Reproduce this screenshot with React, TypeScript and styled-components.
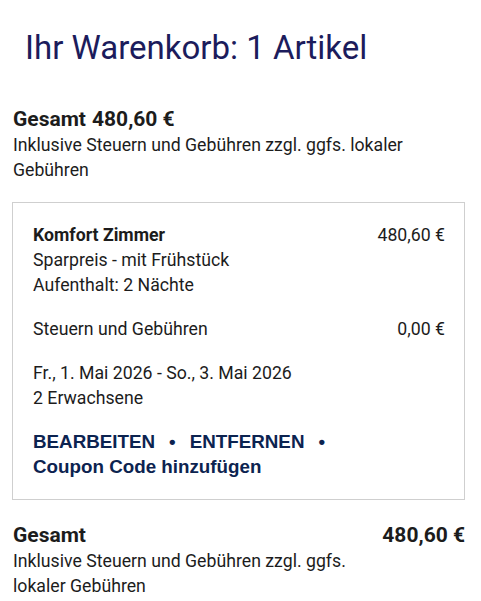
import styled, { createGlobalStyle } from "styled-components";

const GlobalStyle = createGlobalStyle`
  html, body {
    margin: 0;
    padding: 0;
    background: #fff;
  }
  body {
    font-family: Roboto, "Liberation Sans", sans-serif;
    color: #1c1c1c;
  }
`;

const Page = styled.div`
  width: 481px;
  padding: 0 16px 0 12px;
  box-sizing: border-box;
`;

const Title = styled.h1`
  margin: 0;
  padding: 29px 0 0 13px;
  font-size: 33px;
  font-weight: 400;
  line-height: 38px;
  color: #1c1c5c;
`;

const Summary = styled.section`
  padding: 0 0 0 1px;
  margin-top: 38px;
`;

const TotalRow = styled.div<{ $split?: boolean }>`
  display: flex;
  justify-content: ${(p) => (p.$split ? "space-between" : "flex-start")};
  font-size: 21px;
  font-weight: 700;
  line-height: 28px;
  gap: 6px;
`;

const Note = styled.p<{ $narrow?: boolean }>`
  margin: 0;
  font-size: 17.7px;
  line-height: 25px;
  max-width: ${(p) => (p.$narrow ? "360px" : "none")};
`;

const Card = styled.div`
  margin-top: 19px;
  border: 1px solid #cfcfcf;
  padding: 20px 19px 20px 20px;
`;

const Group = styled.div`
  & + & {
    margin-top: 19px;
  }
`;

const Line = styled.div<{ $bold?: boolean }>`
  display: flex;
  justify-content: space-between;
  font-size: 17.7px;
  line-height: 25px;
  font-weight: ${(p) => (p.$bold ? 700 : 400)};
`;

const Price = styled.span`
  font-weight: 400;
`;

const Actions = styled.div`
  margin-top: 18px;
  font-family: "Liberation Sans", Arial, sans-serif;
  font-size: 18.8px;
  font-weight: 700;
  line-height: 25px;
  color: #0c2350;
`;

const Action = styled.a`
  color: inherit;
  text-decoration: none;
  cursor: pointer;
  white-space: nowrap;
`;

const Dot = styled.span`
  margin: 0 14px;
`;

const Footer = styled.section`
  margin-top: 21px;
  padding-left: 1px;
`;

export default function App() {
  return (
    <>
      <GlobalStyle />
      <Page>
        <Title>Ihr Warenkorb: 1 Artikel</Title>
        <Summary>
          <TotalRow>
            <span>Gesamt</span>
            <span>480,60 €</span>
          </TotalRow>
          <Note>Inklusive Steuern und Gebühren zzgl. ggfs. lokaler Gebühren</Note>
        </Summary>
        <Card>
          <Group>
            <Line $bold>
              <span>Komfort Zimmer</span>
              <Price>480,60 €</Price>
            </Line>
            <Line>Sparpreis - mit Frühstück</Line>
            <Line>Aufenthalt: 2 Nächte</Line>
          </Group>
          <Group>
            <Line>
              <span>Steuern und Gebühren</span>
              <span>0,00 €</span>
            </Line>
          </Group>
          <Group>
            <Line>Fr., 1. Mai 2026 - So., 3. Mai 2026</Line>
            <Line>2 Erwachsene</Line>
          </Group>
          <Actions>
            <Action>BEARBEITEN</Action>
            <Dot>•</Dot>
            <Action>ENTFERNEN</Action>
            <Dot>•</Dot>{" "}
            <Action>Coupon Code hinzufügen</Action>
          </Actions>
        </Card>
        <Footer>
          <TotalRow $split>
            <span>Gesamt</span>
            <span>480,60 €</span>
          </TotalRow>
          <Note $narrow>Inklusive Steuern und Gebühren zzgl. ggfs. lokaler Gebühren</Note>
        </Footer>
      </Page>
    </>
  );
}
